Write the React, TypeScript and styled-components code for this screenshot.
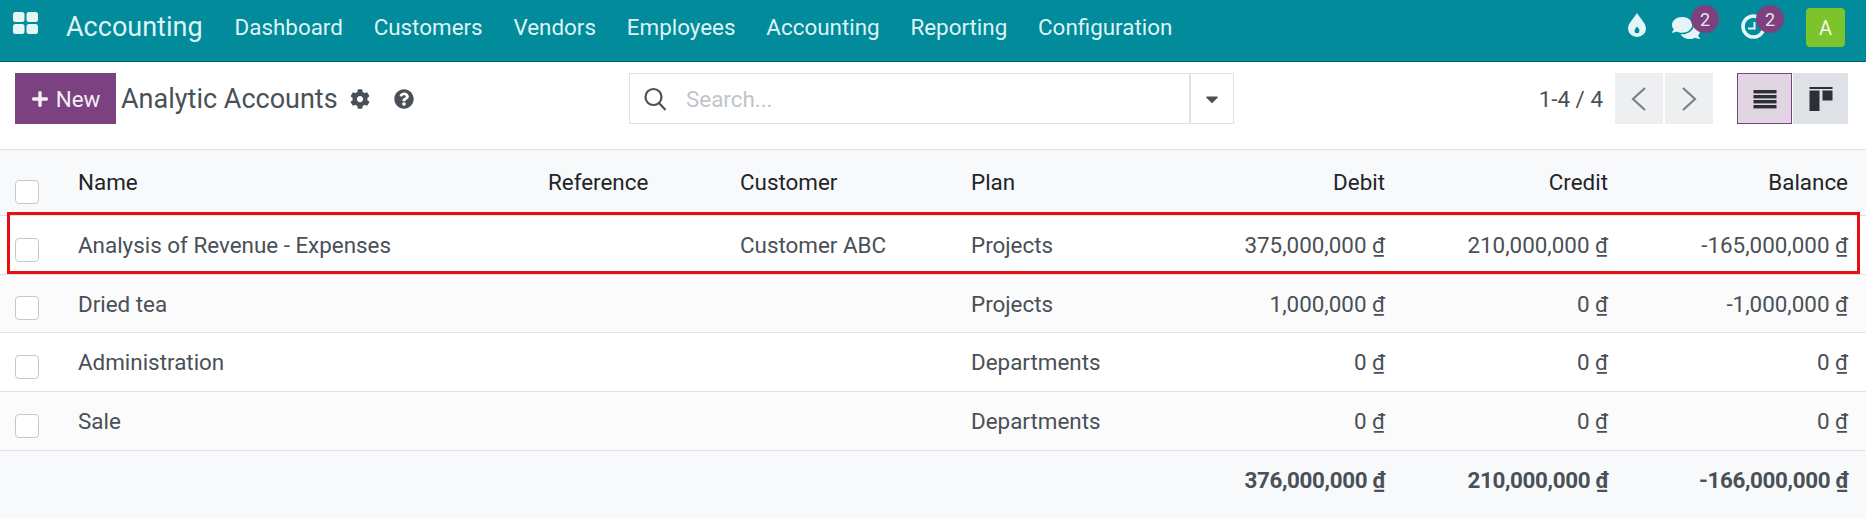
import React from "react";
import styled, { createGlobalStyle } from "styled-components";
import { FaCog, FaQuestionCircle, FaPlus, FaCaretDown, FaComments } from "react-icons/fa";

const Global = createGlobalStyle`
  html, body { margin: 0; padding: 0; background: #fff; }
  body { font-family: Roboto, "Noto Sans", sans-serif; color: #495057; }
  * { box-sizing: border-box; }
`;

const Page = styled.div`
  position: relative;
  width: 1866px;
  height: 518px;
  overflow: hidden;
  background: #fff;
`;

const Navbar = styled.header`
  height: 62px;
  background: #018b9b;
  border-bottom: 1px solid #01616c;
  display: flex;
  align-items: center;
  color: #dff3f5;
  padding: 0 21px 0 13px;
`;
const AppsIcon = styled.svg`
  width: 25px;
  height: 22px;
  margin-top: -15px;
  fill: #e6f6f7;
`;
const Brand = styled.span`
  font-size: 27px;
  margin-left: 28px;
  margin-right: 32px;
  margin-top: -7px;
`;
const Menu = styled.nav`
  display: flex;
  gap: 30.8px;
  font-size: 22.4px;
  margin-top: -8px;
`;
const NavRight = styled.div`
  margin-left: auto;
  display: flex;
  align-items: flex-start;
  align-self: flex-start;
`;
const IconSlot = styled.div<{ $w: number; $top: number }>`
  position: relative;
  width: ${(p) => p.$w}px;
  margin-top: ${(p) => p.$top}px;
  display: flex;
  color: #e3f5f6;
`;
const DropIcon = styled.svg`
  width: 18px;
  height: 24px;
  fill: #e3f5f6;
`;
const ClockIcon = styled.svg`
  width: 25px;
  height: 26px;
  fill: none;
  stroke: #e3f5f6;
  stroke-width: 3.6;
`;
const Badge = styled.span<{ $top: number }>`
  position: absolute;
  top: ${(p) => p.$top}px;
  right: 22px;
  width: 28px;
  height: 28px;
  border-radius: 50%;
  background: #7e4180;
  color: #ece4ee;
  font-size: 18px;
  display: flex;
  align-items: center;
  justify-content: center;
`;
const Avatar = styled.div`
  width: 39px;
  height: 39px;
  margin-top: 8px;
  border-radius: 4px;
  background: #7dc32b;
  color: #f2f9e6;
  font-size: 20px;
  display: flex;
  align-items: center;
  justify-content: center;
`;

const ControlPanel = styled.div`
  height: 88px;
  border-bottom: 1px solid #dee2e6;
  display: grid;
  grid-template-columns: 614px 605px 1fr;
  padding: 11px 18px 0 15px;
  align-items: start;
`;
const LeftCluster = styled.div`
  display: flex;
  align-items: center;
  height: 51px;
`;
const NewButton = styled.button`
  width: 101px;
  height: 51px;
  border: 0;
  background: #7c4180;
  color: #f4eef5;
  font: 400 22.4px Roboto, sans-serif;
  display: flex;
  align-items: center;
  justify-content: center;
  gap: 7px;
  padding: 0;
`;
const Title = styled.h1`
  margin: 0 0 0 5px;
  font-weight: 400;
  font-size: 27px;
  color: #495057;
`;
const TitleIcon = styled.span<{ $ml: number }>`
  margin-left: ${(p) => p.$ml}px;
  display: flex;
  color: #495057;
  font-size: 20px;
`;
const SearchBox = styled.div`
  height: 51px;
  border: 1px solid #dee2e6;
  display: flex;
  align-items: center;
`;
const SearchIcon = styled.svg`
  width: 26px;
  height: 26px;
  margin-left: 12px;
  fill: none;
  stroke: #495057;
  stroke-width: 2.2;
`;
const Placeholder = styled.span`
  margin-left: 18px;
  font-size: 22.4px;
  color: #bfc4cb;
  flex: 1;
`;
const SearchCaret = styled.div`
  width: 44px;
  height: 100%;
  border-left: 2px solid #dee2e6;
  display: flex;
  align-items: center;
  justify-content: center;
  color: #495057;
  font-size: 20px;
`;
const RightCluster = styled.div`
  display: flex;
  align-items: center;
  justify-content: flex-end;
  height: 51px;
`;
const PagerText = styled.span`
  font-size: 22.4px;
  color: #495057;
  margin-right: 12px;
`;
const PagerButton = styled.button`
  width: 48px;
  height: 51px;
  border: 0;
  padding: 0;
  margin-right: 2px;
  background: #eeeff1;
  display: flex;
  align-items: center;
  justify-content: center;
`;
const Chevron = styled.svg`
  width: 18px;
  height: 28px;
  fill: none;
  stroke: #7b7f84;
  stroke-width: 2.2;
`;
const ViewButton = styled.button<{ $active?: boolean }>`
  width: 55px;
  height: 51px;
  padding: 0;
  margin-left: ${(p) => (p.$active ? "22px" : "1px")};
  border: ${(p) => (p.$active ? "1px solid #7c4180" : "0")};
  background: ${(p) => (p.$active ? "#e2d5e3" : "#dee2e6")};
  display: flex;
  align-items: center;
  justify-content: center;
`;
const ViewIcon = styled.svg`
  width: 24px;
  height: 24px;
  fill: #2b2f36;
`;

const COLS = "78px 470px 192px 231px 200px 214px 223px 240px 18px";
const Row = styled.div<{ $h: number; $bg: string; $lift?: number; $color?: string }>`
  display: grid;
  grid-template-columns: ${COLS};
  height: ${(p) => p.$h}px;
  padding-bottom: ${(p) => p.$lift ?? 0}px;
  background: ${(p) => p.$bg};
  border-bottom: 1px solid #dee2e6;
  align-items: center;
  font-size: 22.4px;
  color: ${(p) => p.$color ?? "#495057"};
`;
const FooterRow = styled(Row)`
  border-bottom: 0;
  font-weight: 700;
  letter-spacing: -0.35px;
`;
const Check = styled.span<{ $shift?: number }>`
  width: 24px;
  height: 24px;
  margin-left: 15px;
  margin-top: ${(p) => p.$shift ?? 9}px;
  border: 1px solid #c4c8cc;
  border-radius: 4px;
  background: #fff;
  display: block;
`;
const Num = styled.span`
  text-align: right;
`;
const Highlight = styled.div`
  position: absolute;
  left: 7px;
  top: 212px;
  width: 1853px;
  height: 62px;
  border: 3px solid #e60f14;
  pointer-events: none;
`;

const Money = ({ v }: { v: string }) => <Num>{v}&nbsp;₫</Num>;

const rows = [
  { name: "Analysis of Revenue - Expenses", customer: "Customer ABC", plan: "Projects", d: "375,000,000", c: "210,000,000", b: "-165,000,000", bg: "#fff", h: 59 },
  { name: "Dried tea", customer: "", plan: "Projects", d: "1,000,000", c: "0", b: "-1,000,000", bg: "#fbfbfb", h: 58 },
  { name: "Administration", customer: "", plan: "Departments", d: "0", c: "0", b: "0", bg: "#fff", h: 59 },
  { name: "Sale", customer: "", plan: "Departments", d: "0", c: "0", b: "0", bg: "#fbfbfb", h: 59 },
];

export default function App() {
  return (
    <Page>
      <Global />
      <Navbar>
        <AppsIcon viewBox="0 0 25 22">
          <rect x="0" y="0" width="11.5" height="10" rx="2.5" />
          <rect x="13.5" y="0" width="11.5" height="10" rx="2.5" />
          <rect x="0" y="12" width="11.5" height="10" rx="2.5" />
          <rect x="13.5" y="12" width="11.5" height="10" rx="2.5" />
        </AppsIcon>
        <Brand>Accounting</Brand>
        <Menu>
          <span>Dashboard</span>
          <span>Customers</span>
          <span>Vendors</span>
          <span>Employees</span>
          <span>Accounting</span>
          <span>Reporting</span>
          <span>Configuration</span>
        </Menu>
        <NavRight>
          <IconSlot $w={44} $top={13}>
            <DropIcon viewBox="0 0 18 24">
              <path
                fillRule="evenodd"
                d="M9 0C11 4 18 10 18 15.5A9 8.5 0 0 1 0 15.5C0 10 7 4 9 0ZM9 13.5C8 15 6.5 16.2 6.5 17.8A2.5 2.5 0 0 0 11.5 17.8C11.5 16.2 10 15 9 13.5Z"
              />
            </DropIcon>
          </IconSlot>
          <IconSlot $w={69} $top={14}>
            <FaComments size={28} />
            <Badge $top={-9}>2</Badge>
          </IconSlot>
          <IconSlot $w={65} $top={13}>
            <ClockIcon viewBox="0 0 25 26">
              <circle cx="12.5" cy="13.5" r="10.5" />
              <path d="M13.5 9v6.5H7" strokeWidth="2" />
            </ClockIcon>
            <Badge $top={-8}>2</Badge>
          </IconSlot>
          <Avatar>A</Avatar>
        </NavRight>
      </Navbar>

      <ControlPanel>
        <LeftCluster>
          <NewButton>
            <FaPlus size={18} />
            New
          </NewButton>
          <Title>Analytic Accounts</Title>
          <TitleIcon $ml={12}><FaCog /></TitleIcon>
          <TitleIcon $ml={24}><FaQuestionCircle /></TitleIcon>
        </LeftCluster>
        <SearchBox>
          <SearchIcon viewBox="0 0 26 26">
            <circle cx="11.5" cy="11" r="8" />
            <path d="M17 17l6.5 7" />
          </SearchIcon>
          <Placeholder>Search...</Placeholder>
          <SearchCaret><FaCaretDown /></SearchCaret>
        </SearchBox>
        <RightCluster>
          <PagerText>1-4 / 4</PagerText>
          <PagerButton>
            <Chevron viewBox="0 0 18 28"><path d="M15 3L3 14l12 11" /></Chevron>
          </PagerButton>
          <PagerButton>
            <Chevron viewBox="0 0 18 28"><path d="M3 3l12 11L3 25" /></Chevron>
          </PagerButton>
          <ViewButton $active>
            <ViewIcon viewBox="0 0 24 24">
              <rect x="0.5" y="3" width="23" height="3.4" />
              <rect x="0.5" y="8" width="23" height="3.4" />
              <rect x="0.5" y="13" width="23" height="3.4" />
              <rect x="0.5" y="18" width="23" height="3.4" />
            </ViewIcon>
          </ViewButton>
          <ViewButton>
            <ViewIcon viewBox="0 0 24 24">
              <rect x="0.5" y="0" width="23" height="2" />
              <rect x="0.5" y="3.5" width="10" height="20.5" />
              <rect x="13.5" y="3.5" width="10" height="10" />
            </ViewIcon>
          </ViewButton>
        </RightCluster>
      </ControlPanel>

      <Row $h={66} $bg="#f8f9fa" $color="#212529" $lift={2}>
        <Check $shift={20} />
        <span>Name</span>
        <span>Reference</span>
        <span>Customer</span>
        <span>Plan</span>
        <Num>Debit</Num>
        <Num>Credit</Num>
        <Num>Balance</Num>
      </Row>
      {rows.map((r) => (
        <Row key={r.name} $h={r.h} $bg={r.bg}>
          <Check />
          <span>{r.name}</span>
          <span />
          <span>{r.customer}</span>
          <span>{r.plan}</span>
          <Money v={r.d} />
          <Money v={r.c} />
          <Money v={r.b} />
        </Row>
      ))}
      <FooterRow $h={67} $bg="#f8f9fa" $lift={10}>
        <span />
        <span />
        <span />
        <span />
        <span />
        <Money v="376,000,000" />
        <Money v="210,000,000" />
        <Money v="-166,000,000" />
      </FooterRow>
      <Highlight />
    </Page>
  );
}
